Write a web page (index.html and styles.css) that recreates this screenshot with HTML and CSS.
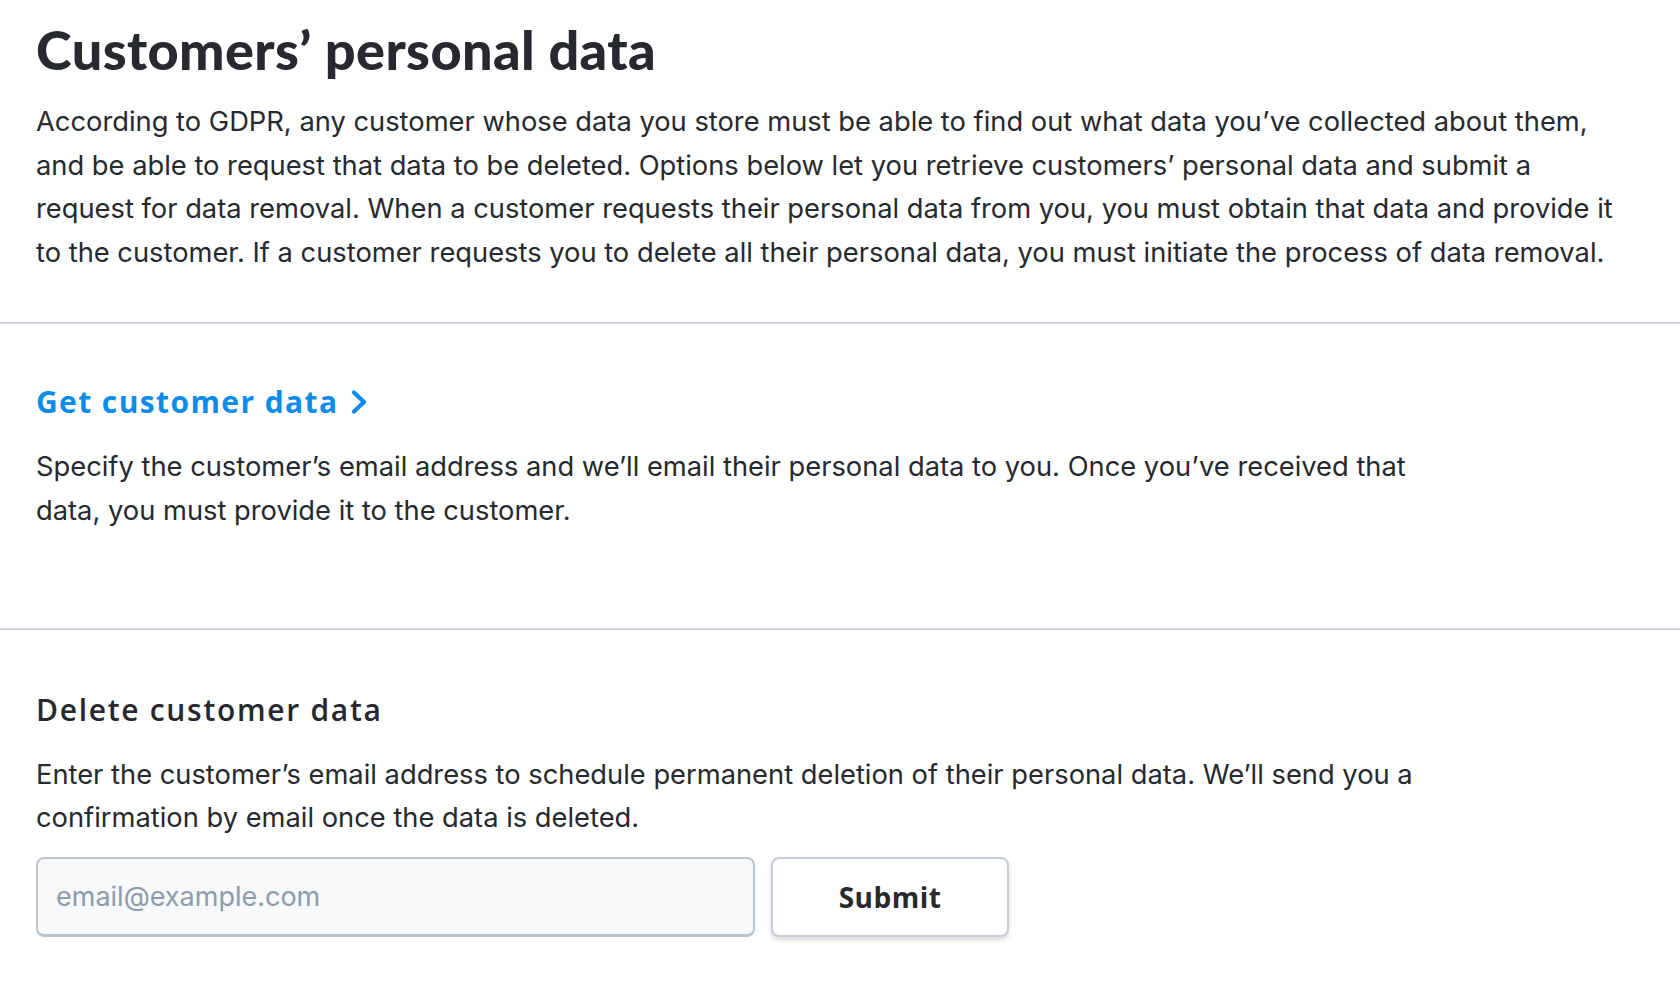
FILE: index.html
```html
<!DOCTYPE html>
<html lang="en">
<head>
<meta charset="utf-8">
<title>Customers’ personal data</title>
<link rel="stylesheet" href="styles.css">
</head>
<body>
<main class="page">
  <section class="intro">
    <h1 class="title">Customers’ personal data</h1>
    <p class="lead">According to GDPR, any customer whose data you store must be able to find out what data you’ve collected about them,<br>and be able to request that data to be deleted. Options below let you retrieve customers’ personal data and submit a<br>request for data removal. When a customer requests their personal data from you, you must obtain that data and provide it<br>to the customer. If a customer requests you to delete all their personal data, you must initiate the process of data removal.</p>
  </section>
  <section class="block">
    <a class="block-link" href="#">Get customer data
      <svg class="chev" viewBox="0 0 20 26" width="20" height="26" aria-hidden="true"><path d="M5 3.5 L15 13 L5 22.5" fill="none" stroke="currentColor" stroke-width="4.2" stroke-linecap="round" stroke-linejoin="round"/></svg>
    </a>
    <p class="text">Specify the customer’s email address and we’ll email their personal data to you. Once you’ve received that<br>data, you must provide it to the customer.</p>
  </section>
  <section class="block block-last">
    <h2 class="block-title">Delete customer data</h2>
    <p class="text">Enter the customer’s email address to schedule permanent deletion of their personal data. We’ll send you a<br>confirmation by email once the data is deleted.</p>
    <form class="form" onsubmit="return false">
      <input class="email" type="email" placeholder="email@example.com">
      <button class="submit" type="submit">Submit</button>
    </form>
  </section>
</main>
</body>
</html>
```
FILE: styles.css
```css
html, body {
  margin: 0;
  padding: 0;
  background: #ffffff;
}
body {
  font-family: Inter, "Noto Sans", sans-serif;
  color: #26292e;
}
.intro {
  padding: 18px 36px 48px;
  border-bottom: 2px solid #cfd5dc;
}
.title {
  margin: 0;
  font-family: Lato, sans-serif;
  font-weight: 900;
  font-size: 54px;
  line-height: 64px;
  letter-spacing: 0.4px;
  color: #26292e;
}
.lead {
  margin: 18px 0 0;
  font-size: 27.3px;
  line-height: 43.6px;
  white-space: nowrap;
}
.block {
  padding: 58px 36px 95px;
  border-bottom: 2px solid #cfd5dc;
}
.block-last {
  border-bottom: 0;
  padding-top: 60px;
  padding-bottom: 40px;
}
.block-link {
  display: inline-flex;
  align-items: center;
  gap: 10px;
  font-family: "Open Sans", sans-serif;
  font-weight: 700;
  font-size: 30px;
  line-height: 40px;
  letter-spacing: 1.4px;
  color: #0c8ce9;
  text-decoration: none;
}
.chev {
  display: block;
}
.block-title {
  margin: 0;
  font-family: "Open Sans", sans-serif;
  font-weight: 600;
  font-size: 30px;
  line-height: 40px;
  letter-spacing: 1.7px;
  color: #26292e;
}
.text {
  margin: 23px 0 0;
  max-width: 1410px;
  font-size: 27.3px;
  line-height: 43.6px;
}
.form {
  display: flex;
  gap: 16px;
  margin-top: 17px;
}
.email {
  box-sizing: border-box;
  width: 719px;
  height: 80px;
  padding: 0 18px;
  border: 2px solid #bac5d0;
  border-bottom-width: 3px;
  border-radius: 8px;
  background: #f7f9fb;
  font-family: Inter, sans-serif;
  font-size: 27px;
  color: #26292e;
}
.email::placeholder {
  color: #8d9cab;
}
.submit {
  box-sizing: border-box;
  width: 238px;
  height: 80px;
  border: 2px solid #c5cdd6;
  border-radius: 8px;
  background: #ffffff;
  box-shadow: 0 3px 4px rgba(30, 40, 55, 0.16);
  font-family: "Open Sans", sans-serif;
  font-weight: 700;
  font-size: 28px;
  letter-spacing: 0.5px;
  color: #26292e;
}
```
